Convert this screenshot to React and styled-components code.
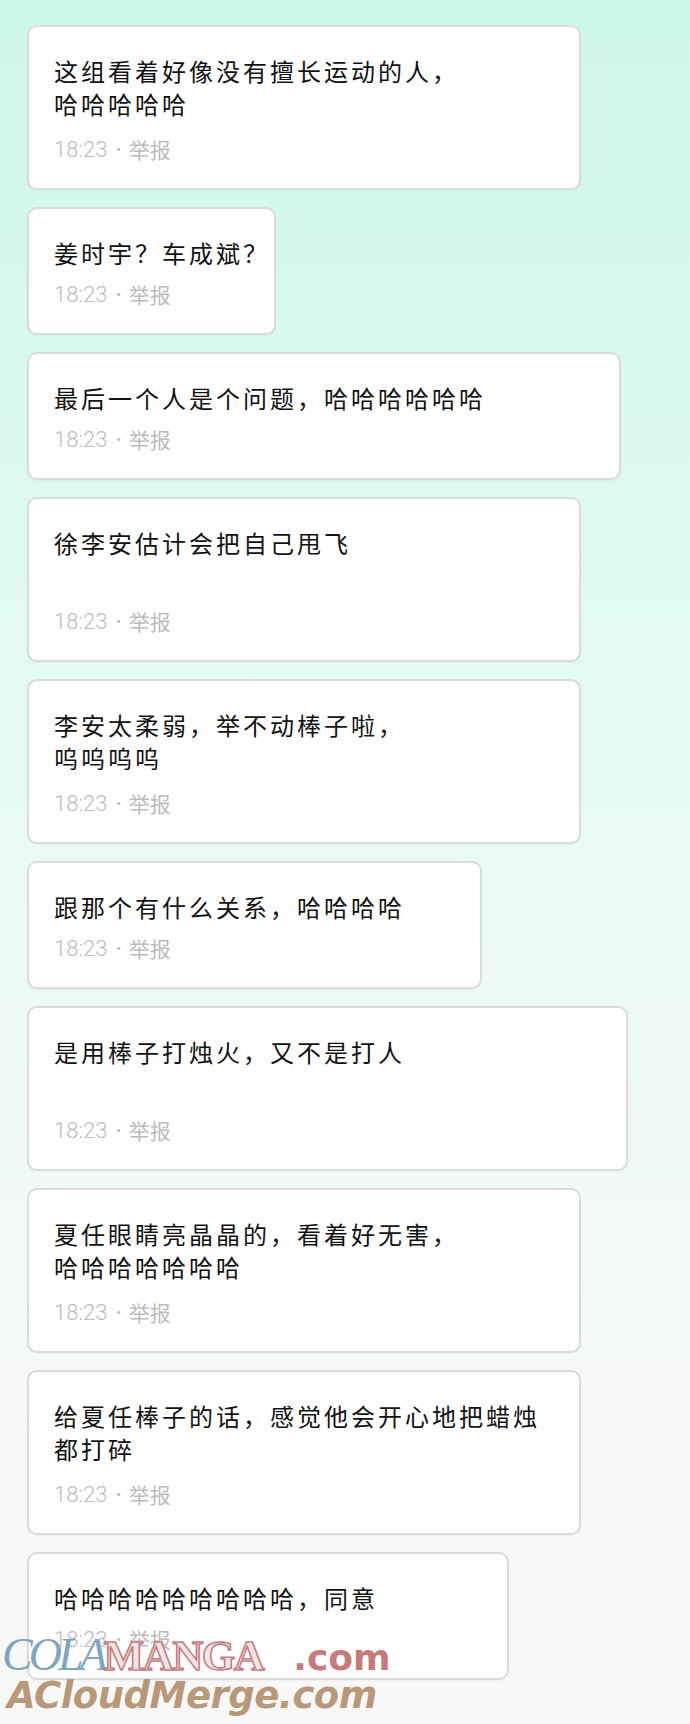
import React from 'react'
import styled, { createGlobalStyle } from 'styled-components'

const GlobalStyle = createGlobalStyle`
  html, body { margin: 0; padding: 0; }
  body { font-family: 'Noto Sans CJK SC', 'Noto Sans', sans-serif; }
`

const Page = styled.div`
  position: relative;
  min-height: 1724px;
  box-sizing: border-box;
  padding: 25px 0 0 27px;
  display: flex;
  flex-direction: column;
  align-items: flex-start;
  gap: 17px;
  background: linear-gradient(180deg, #cdf8ea 0%, #dbf9f0 25%, #e9fbf6 50%, #f1f9f7 68%, #f8f8f8 86%, #f8f8f8 100%);
`
const Card = styled.div`
  width: ${props => props.$width}px;
  height: ${props => props.$tall ? 165 : 128}px;
  box-sizing: border-box;
  padding: 28px 16px 24px 25px;
  display: flex;
  flex-direction: column;
  justify-content: space-between;
  background-color: #ffffff;
  border: 2px solid #d9dcdb;
  border-radius: 10px;
  box-shadow: 0 1px 2px rgba(0, 0, 0, 0.04);
`
const Message = styled.div`
  font-family: 'Noto Sans CJK SC', sans-serif;
  font-size: 24px;
  line-height: 32.5px;
  letter-spacing: 3px;
  color: #111111;
  white-space: pre;
`
const Meta = styled.div`
  display: flex;
  align-items: center;
  height: 30px;
  color: #bcbcbc;
  font-size: 21px;
`
const Time = styled.span`
  font-family: Roboto, 'Noto Sans', sans-serif;
  font-weight: 300;
  font-size: 22px;
`
const Dot = styled.span`
  font-family: Roboto, sans-serif;
  font-weight: 700;
  margin: 0 7px 0 8px;
`
const Report = styled.span`
  font-family: 'Noto Sans CJK SC', sans-serif;
`

const Watermark = styled.div`
  position: absolute;
  left: 2px;
  top: 1628px;
  display: flex;
  flex-direction: column;
  pointer-events: none;
`
const MarkTop = styled.div`
  display: flex;
  align-items: baseline;
  height: 52px;
`
const Cola = styled.span`
  font-family: 'Liberation Serif', serif;
  font-style: italic;
  font-size: 46px;
  letter-spacing: -4px;
  color: #7fa6bf;
`
const Manga = styled.span`
  font-family: 'Liberation Serif', serif;
  font-weight: 700;
  font-size: 43px;
  letter-spacing: -1.5px;
  color: #f4e6e6;
  -webkit-text-stroke: 1.6px #c77d7d;
`
const Dotcom = styled.span`
  margin-left: 30px;
  font-family: 'DejaVu Sans', sans-serif;
  font-weight: 700;
  font-size: 36px;
  color: #c67a7a;
`
const Merge = styled.span`
  margin-left: 5px;
  margin-top: -6px;
  font-family: 'DejaVu Sans', sans-serif;
  font-weight: 700;
  font-style: italic;
  font-size: 37px;
  letter-spacing: -0.5px;
  color: #b9987a;
`

const comments = [
  { text: '这组看着好像没有擅长运动的人，\n哈哈哈哈哈', width: 554, tall: true },
  { text: '姜时宇？车成斌？', width: 249 },
  { text: '最后一个人是个问题，哈哈哈哈哈哈', width: 594 },
  { text: '徐李安估计会把自己甩飞', width: 554, tall: true },
  { text: '李安太柔弱，举不动棒子啦，\n呜呜呜呜', width: 554, tall: true },
  { text: '跟那个有什么关系，哈哈哈哈', width: 455 },
  { text: '是用棒子打烛火，又不是打人', width: 601, tall: true },
  { text: '夏任眼睛亮晶晶的，看着好无害，\n哈哈哈哈哈哈哈', width: 554, tall: true },
  { text: '给夏任棒子的话，感觉他会开心地把蜡烛\n都打碎', width: 554, tall: true },
  { text: '哈哈哈哈哈哈哈哈哈，同意', width: 482 }
]

const App = () => (
  <Page>
    <GlobalStyle />
    {comments.map((c, i) => (
      <Card key={i} $width={c.width} $tall={c.tall}>
        <Message>{c.text}</Message>
        <Meta>
          <Time>18:23</Time>
          <Dot>·</Dot>
          <Report>举报</Report>
        </Meta>
      </Card>
    ))}
    <Watermark>
      <MarkTop>
        <Cola>COLA</Cola>
        <Manga>MANGA</Manga>
        <Dotcom>.com</Dotcom>
      </MarkTop>
      <Merge>ACloudMerge.com</Merge>
    </Watermark>
  </Page>
)

export default App
